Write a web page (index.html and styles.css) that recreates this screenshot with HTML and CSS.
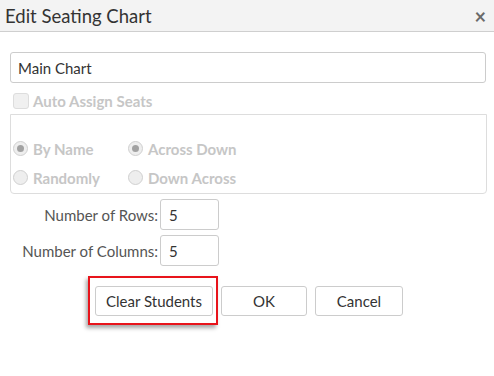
FILE: index.html
```html
<!DOCTYPE html>
<html lang="en">
<head>
    <meta charset="utf-8">
    <link rel="stylesheet" href="styles.css">
</head>
<body>
    <div class="dialog">
        <div class="dialog-header">
            <span class="dialog-title">Edit Seating Chart</span>
            <span class="dialog-close">&times;</span>
        </div>
        <div class="dialog-body">
            <input class="chart-name" type="text" value="Main Chart">

            <div class="auto-assign">
                <span class="check-box"></span>
                <span class="muted-label">Auto Assign Seats</span>
            </div>

            <div class="assign-options">
                <div class="option-row">
                    <div class="option"><span class="radio checked"></span><span class="muted-label">By Name</span></div>
                    <div class="option"><span class="radio checked"></span><span class="muted-label">Across Down</span></div>
                </div>
                <div class="option-row">
                    <div class="option"><span class="radio"></span><span class="muted-label">Randomly</span></div>
                    <div class="option"><span class="radio"></span><span class="muted-label">Down Across</span></div>
                </div>
            </div>

            <div class="size-grid">
                <label class="size-label">Number of Rows:</label>
                <input class="size-input" type="text" value="5">
                <label class="size-label">Number of Columns:</label>
                <input class="size-input" type="text" value="5">
            </div>

            <div class="button-row">
                <span class="highlight-wrap">
                    <button class="btn">Clear Students</button>
                </span>
                <button class="btn btn-ok">OK</button>
                <button class="btn btn-cancel">Cancel</button>
            </div>
        </div>
    </div>
</body>
</html>
```

FILE: styles.css
```css
body {
    margin: 0;
    background: #ffffff;
    font-family: 'Lato', 'Open Sans', sans-serif;
    color: #333333;
}

.dialog {
    width: 494px;
    height: 376px;
}

.dialog-header {
    height: 31px;
    background: #f3f3f3;
    border-bottom: 1px solid #cfcfcf;
    display: flex;
    align-items: center;
    justify-content: space-between;
    padding: 0 8px 0 5px;
}

.dialog-title {
    font-size: 18.5px;
    color: #333333;
}

.dialog-close {
    font-size: 20px;
    font-weight: bold;
    color: #6a6a6a;
}

.dialog-body {
    padding: 20px 8px 0 10px;
}

.chart-name {
    display: block;
    box-sizing: border-box;
    width: 476px;
    height: 31px;
    margin: 0;
    border: 1px solid #cccccc;
    border-radius: 3px;
    padding: 0 7px;
    font-family: inherit;
    font-size: 15px;
    color: #333333;
    outline: none;
}

.auto-assign {
    display: flex;
    align-items: center;
    gap: 4px;
    height: 20px;
    margin-top: 8px;
    padding-left: 3px;
}

.check-box {
    width: 14px;
    height: 14px;
    border: 1px solid #dddddd;
    border-radius: 3px;
    background: #f0f0f0;
}

.muted-label {
    font-size: 15px;
    font-weight: bold;
    color: #c6c6c6;
}

.assign-options {
    box-sizing: border-box;
    width: 477px;
    height: 80px;
    margin-top: 3px;
    border: 1px solid #dddddd;
    border-radius: 0 0 4px 4px;
    padding: 19px 0 0 2px;
}

.option-row {
    display: flex;
    height: 29px;
    align-items: center;
}

.option {
    display: flex;
    align-items: center;
    gap: 5px;
    width: 115px;
}

.radio {
    box-sizing: border-box;
    width: 15px;
    height: 15px;
    border: 1px solid #d0d0d0;
    border-radius: 50%;
    background: #eeeeee;
    display: flex;
    align-items: center;
    justify-content: center;
}

.radio.checked::after {
    content: "";
    width: 7px;
    height: 7px;
    border-radius: 50%;
    background: #a2a2a2;
}

.size-grid {
    display: grid;
    grid-template-columns: 148px 59px;
    column-gap: 2px;
    row-gap: 5px;
    align-items: center;
    margin-top: 5px;
}

.size-label {
    text-align: right;
    font-size: 15px;
    color: #555555;
}

.size-input {
    box-sizing: border-box;
    width: 59px;
    height: 31px;
    margin: 0;
    border: 1px solid #cccccc;
    border-radius: 3px;
    padding: 0 8px;
    font-family: inherit;
    font-size: 15px;
    color: #333333;
    outline: none;
}

.button-row {
    display: flex;
    gap: 8px;
    margin-top: 20px;
    padding-left: 85px;
}

.highlight-wrap {
    position: relative;
    display: flex;
}

.highlight-wrap::after {
    content: "";
    position: absolute;
    top: -10px;
    bottom: -9px;
    left: -7px;
    right: -5px;
    border: 2px solid #e8141b;
    box-shadow: -2px 3px 4px rgba(0, 0, 0, 0.35);
}

.btn {
    box-sizing: border-box;
    height: 30px;
    width: 118px;
    background: #ffffff;
    border: 1px solid #cccccc;
    border-radius: 3px;
    font-family: inherit;
    font-size: 15px;
    color: #333333;
    padding: 0;
}

.btn-ok {
    width: 86px;
}

.btn-cancel {
    width: 88px;
}
```
